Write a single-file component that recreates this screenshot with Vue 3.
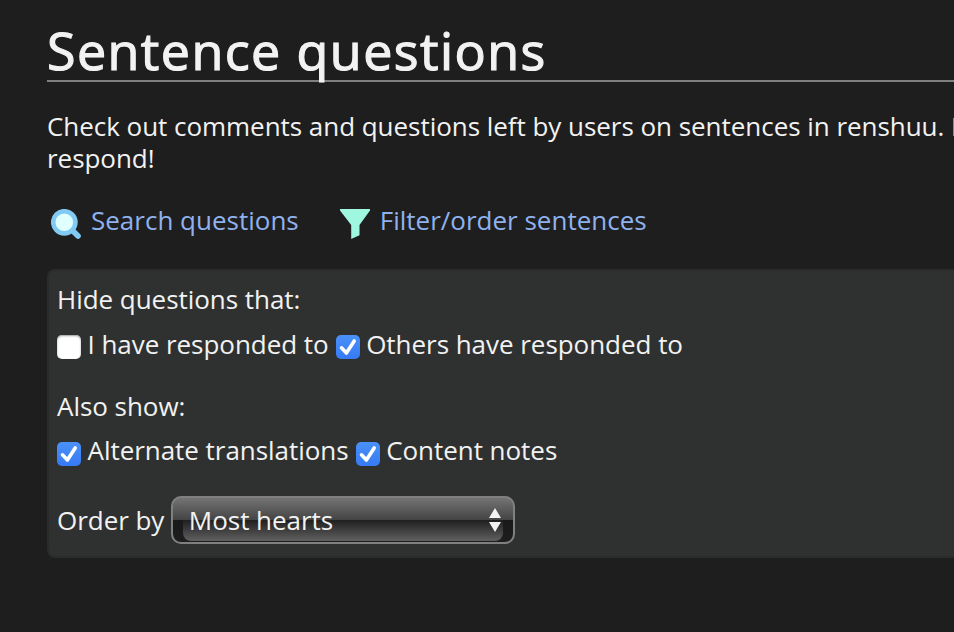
<script setup>
import { reactive, ref } from 'vue'

const hide = reactive([
  { label: 'I have responded to', checked: false },
  { label: 'Others have responded to', checked: true },
])

const show = reactive([
  { label: 'Alternate translations', checked: true },
  { label: 'Content notes', checked: true },
])

const order = ref('Most hearts')
</script>

<template>
  <main class="page">
    <h1 class="title">Sentence questions</h1>
    <p class="intro">Check out comments and questions left by users on sentences in renshuu. F<br />respond!</p>

    <nav class="links">
      <a class="link" href="#">
        <svg class="link-icon" width="30" height="30" viewBox="0 0 30 30">
          <path d="M21.500 21.500l5.500 5.500" stroke="#80caf3" stroke-width="5.600" stroke-linecap="round" />
          <circle cx="13.3" cy="13.3" r="11.1" fill="#e0ffff" stroke="#80caf3" stroke-width="4.6" />
        </svg>
        <span>Search questions</span>
      </a>
      <a class="link" href="#">
        <svg class="link-icon" width="30" height="30" viewBox="0 0 30 30">
          <path d="M0 0h30v1.500L19.500 16v10.300L11.200 30V16L0 1.500z" fill="#9ff7e0" />
        </svg>
        <span>Filter/order sentences</span>
      </a>
    </nav>

    <section class="panel">
      <p class="heading">Hide questions that:</p>
      <div class="options">
        <label v-for="item in hide" :key="item.label" class="option">
          <input v-model="item.checked" type="checkbox" class="native" />
          <span class="box" :class="{ checked: item.checked }">
            <svg v-if="item.checked" width="24" height="24" viewBox="0 0 24 24">
              <path d="M5.500 12.800l4.900 5.200L18.200 6" />
            </svg>
          </span>
          <span>{{ item.label }}</span>
        </label>
      </div>

      <p class="heading second">Also show:</p>
      <div class="options show">
        <label v-for="item in show" :key="item.label" class="option">
          <input v-model="item.checked" type="checkbox" class="native" />
          <span class="box" :class="{ checked: item.checked }">
            <svg v-if="item.checked" width="24" height="24" viewBox="0 0 24 24">
              <path d="M5.500 12.800l4.900 5.200L18.200 6" />
            </svg>
          </span>
          <span>{{ item.label }}</span>
        </label>
      </div>

      <div class="order">
        <span>Order by</span>
        <button type="button" class="select">
          <span class="select-face">
            <span>{{ order }}</span>
          </span>
          <svg class="arrows" width="12" height="24" viewBox="0 0 12 24">
            <path d="M6 0l6 10H0zM0 14h12L6 24z" fill="#f2f2f2" />
          </svg>
        </button>
      </div>
    </section>
  </main>
</template>

<style>
body {
  background: #1e1e1e;
  overflow: hidden;
}
</style>

<style scoped>
.page {
  box-sizing: border-box;
  width: 100%;
  height: 632px;
  padding: 20px 0 0 47px;
  overflow: hidden;
  color: #f2f2f2;
  font-family: "Open Sans", "Noto Sans", sans-serif;
  font-size: 26px;
  line-height: 32px;
  letter-spacing: -0.04px;
}

.title {
  height: 60px;
  margin: 0;
  border-bottom: 2px solid #808080;
  font-size: 52px;
  font-weight: 500;
  line-height: 60px;
  letter-spacing: 1.42px;
  -webkit-text-stroke: 1.2px #f2f2f2;
}

.intro {
  margin: 28px 0 0;
  white-space: nowrap;
}

.links {
  display: flex;
  gap: 41px;
  margin-top: 30px;
  padding-left: 4px;
}

.link {
  display: flex;
  gap: 10px;
  color: #8fb2ee;
  letter-spacing: 0;
  text-decoration: none;
}

.link-icon {
  margin-top: 5px;
}

.panel {
  box-sizing: border-box;
  height: 289px;
  margin-top: 30px;
  padding: 12px 8px 0;
  border: 2px solid #2a2c2b;
  border-right: 0;
  border-radius: 8px 0 0 8px;
  background: #2f3130;
}

.heading {
  margin: 0;
}

.second {
  margin-top: 30px;
}

.options {
  display: flex;
  gap: 7px;
  margin-top: 13px;
}

.options.show {
  margin-top: 12px;
}

.options.show .box {
  margin-top: 8px;
}

.option {
  display: flex;
  gap: 6.500px;
}

.native {
  display: none;
}

.box {
  box-sizing: border-box;
  width: 24px;
  height: 24px;
  margin-top: 7px;
  border-radius: 5px;
  background: #fff;
  box-shadow: inset 0 1px 2px #999;
}

.box.checked {
  background: linear-gradient(#4b91f8, #367af5);
  box-shadow: none;
}

.box svg {
  display: block;
}

.box path {
  fill: none;
  stroke: #fff;
  stroke-width: 3.6;
  stroke-linecap: round;
  stroke-linejoin: round;
}

.order {
  display: flex;
  align-items: center;
  gap: 6.500px;
  margin-top: 30px;
}

.select {
  display: flex;
  box-sizing: border-box;
  position: relative;
  width: 344px;
  height: 48px;
  padding: 0 10px;
  border: 2px solid #808080;
  border-radius: 10px;
  background: linear-gradient(#747474, #434343 50%, #191919 50%, #1e1e1e);
  color: #f2f2f2;
  font: inherit;
  letter-spacing: inherit;
  text-align: left;
}

.select-face {
  flex: 1;
  height: 43px;
  padding: 6px 6px 0;
  box-sizing: border-box;
  border-radius: 0 0 8px 8px;
  background: linear-gradient(#747474, #434343 52%, #202020 52%, #606060);
}

.arrows {
  position: absolute;
  top: 10px;
  right: 12px;
}
</style>
